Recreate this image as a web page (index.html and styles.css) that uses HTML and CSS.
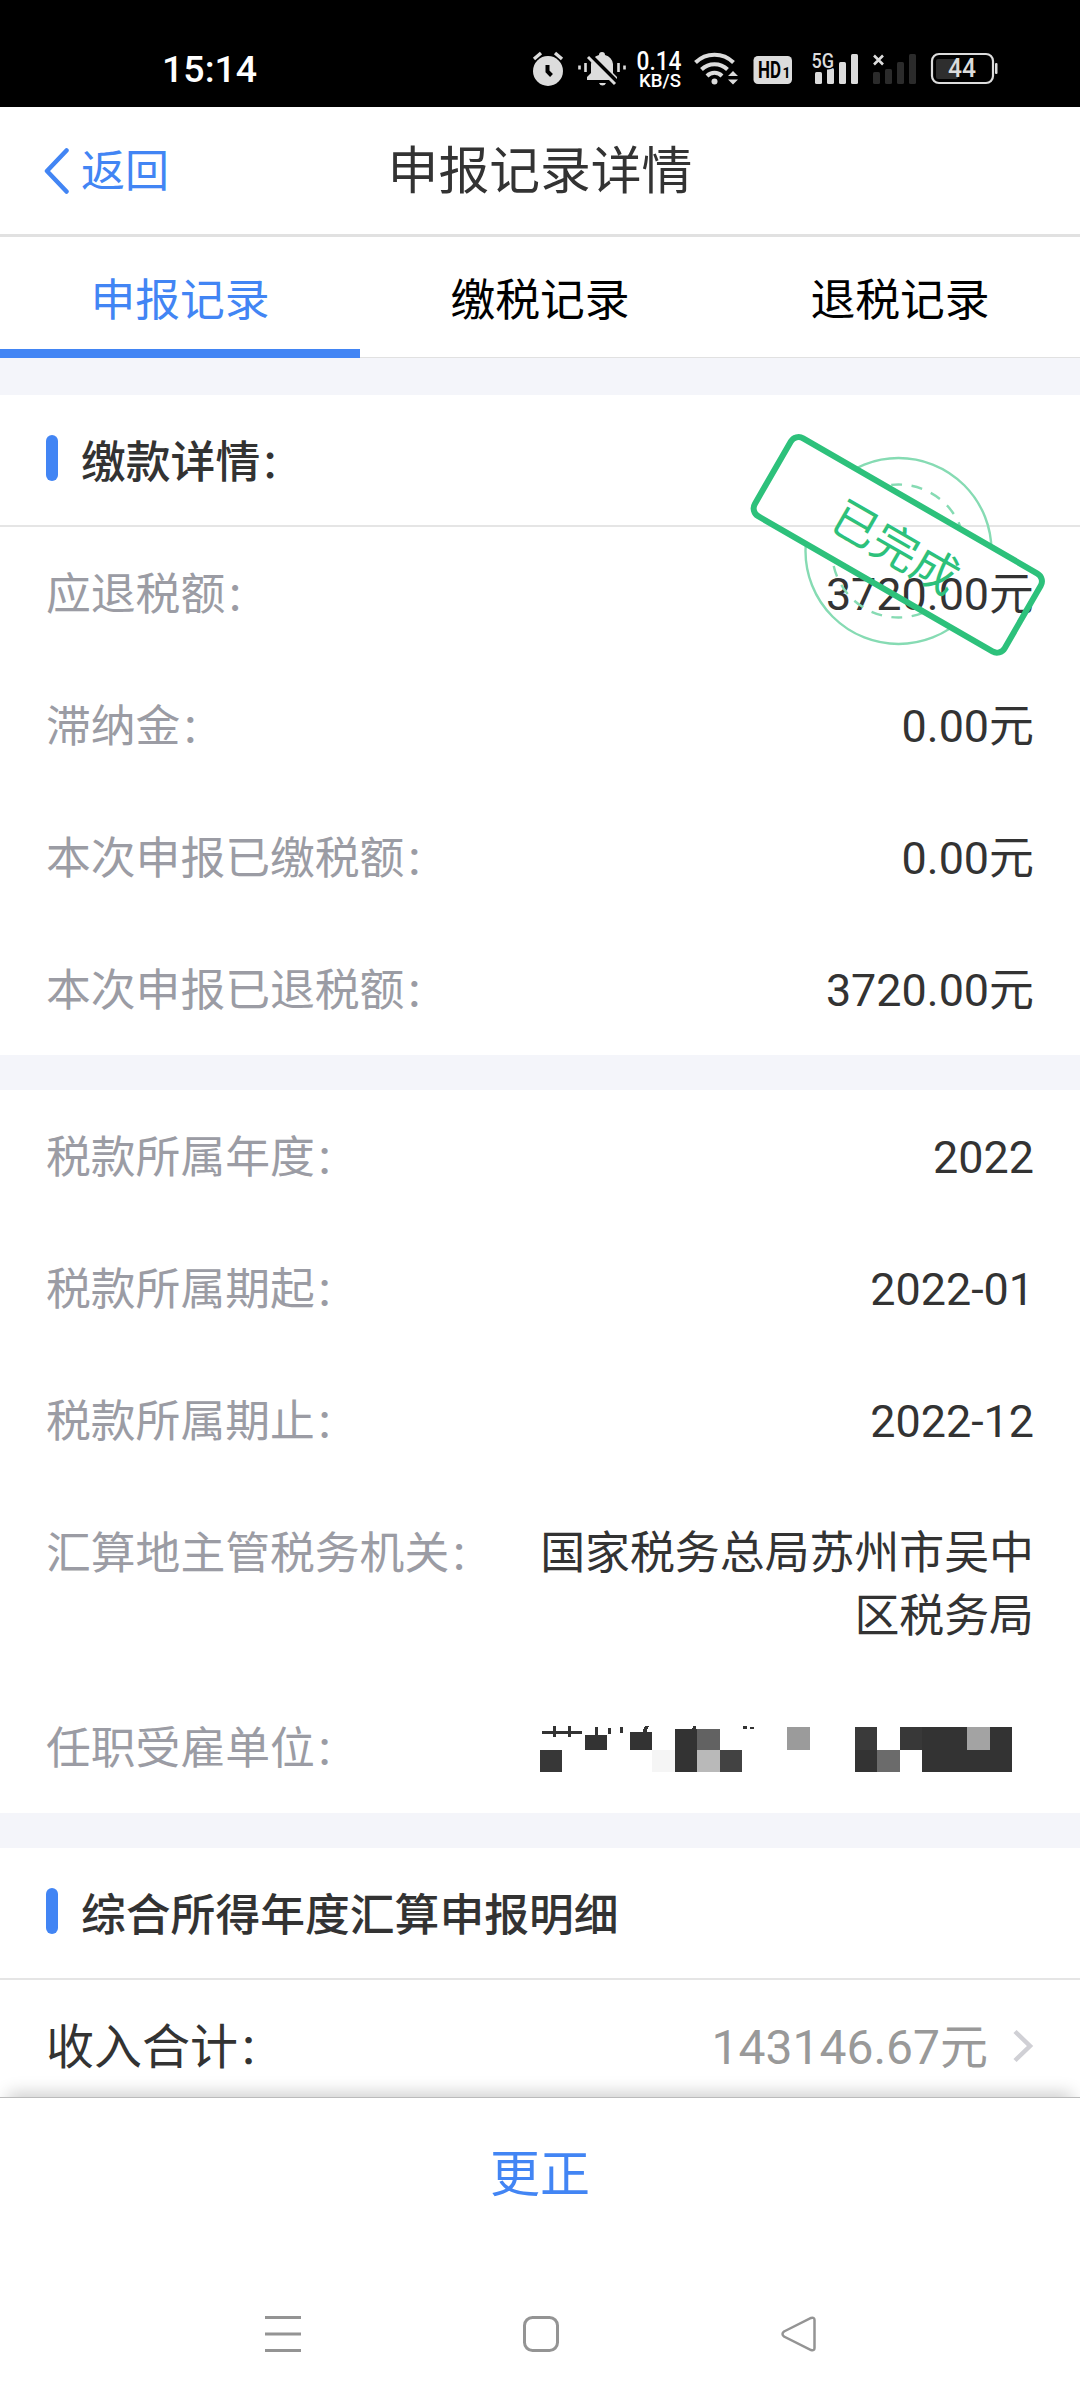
FILE: index.html
```html
<!DOCTYPE html>
<html lang="zh-CN">
<head>
  <meta charset="UTF-8">
  <meta name="viewport" content="width=device-width, initial-scale=1">
  <title>申报记录详情</title>
  <link rel="stylesheet" href="styles.css">
</head>
<body>

  <div class="status-bar">
    <span class="time">15:14</span>
    <svg class="status-icons" width="520" height="80" viewBox="0 0 520 80" fill="#dcdcdc">
      <!-- alarm -->
      <circle cx="48" cy="41" r="15"/>
      <path d="M34 29l7-6M62 29l-7-6" stroke="#dcdcdc" stroke-width="3.4"/>
      <path d="M47.5 35v6.500l4 4" stroke="#000" stroke-width="4" fill="none"/>
      <!-- muted bell -->
      <path d="M87 50v-3l4-4V34a11 11 0 0 1 8-9q0-3 3-3t3 3a11 11 0 0 1 8 9v9l4 4v3z"/>
      <path d="M99 53h7q-1 2.500-3.500 2.500T99 53z"/>
      <path d="M90 25l27 27" stroke="#000" stroke-width="4"/>
      <path d="M88 27l27 27" stroke="#dcdcdc" stroke-width="3"/>
      <path d="M79.500 35.500v4M85.500 33v9M118.500 33v9M124.500 35.500v4" stroke="#dcdcdc" stroke-width="2.600"/>
      <!-- network speed -->
      <text class="speed" x="136.500" y="39.500" textLength="45" lengthAdjust="spacingAndGlyphs">0.14</text>
      <text class="unit" x="139" y="56.500" textLength="42" lengthAdjust="spacingAndGlyphs">KB/S</text>
      <!-- wifi -->
      <g fill="none" stroke="#dcdcdc" stroke-width="4">
        <path d="M195.500 32.500a27 27 0 0 1 38 0"/>
        <path d="M201.500 39.500a18.500 18.500 0 0 1 26 0"/>
        <path d="M207 46a10.500 10.500 0 0 1 15 0"/>
      </g>
      <circle cx="214.500" cy="51.500" r="3"/>
      <path d="M228 46l5-5 5 5zM228 49.500l5 5 5-5z"/>
      <!-- HD -->
      <rect x="253.500" y="26" width="38.500" height="28" rx="4.500"/>
      <text class="hd" x="258" y="47.500" textLength="23" lengthAdjust="spacingAndGlyphs">HD</text>
      <text class="hd-num" x="282.500" y="47.500">1</text>
      <!-- signal, sim 1 -->
      <rect x="315" y="42" width="7" height="12" rx="1.500"/>
      <rect x="327" y="38" width="7" height="16" rx="1.500"/>
      <rect x="339" y="32" width="7" height="22" rx="1.500"/>
      <rect x="351" y="24" width="7" height="30" rx="1.500"/>
      <text class="net" x="311.500" y="37.500" textLength="22.500" lengthAdjust="spacingAndGlyphs">5G</text>
      <!-- signal, sim 2 -->
      <g fill="#2b2b2b">
        <rect x="373" y="42" width="7" height="12" rx="1.500"/>
        <rect x="385" y="39" width="7" height="15" rx="1.500"/>
        <rect x="397" y="32" width="7" height="22" rx="1.500"/>
        <rect x="409" y="24" width="7" height="30" rx="1.500"/>
      </g>
      <path d="M374 25.500l9 9M383 25.500l-9 9" stroke="#dcdcdc" stroke-width="2.600"/>
      <!-- battery -->
      <rect x="436" y="29" width="22" height="20" rx="2" fill="#2e2e2e"/>
      <rect x="432" y="24" width="61" height="29" rx="7" fill="none" stroke="#dcdcdc" stroke-width="2.200"/>
      <rect x="495" y="33" width="2.500" height="11" rx="1"/>
      <text class="battery" x="448" y="47" textLength="28" lengthAdjust="spacingAndGlyphs">44</text>
    </svg>
  </div>

  <header>
    <a class="back" href="#">
      <svg width="26" height="48" viewBox="0 0 26 48"><path d="M22.500 3.500L3 24l19.500 20.500" fill="none" stroke="#4285f4" stroke-width="4.500" stroke-linecap="round" stroke-linejoin="round"/></svg>
      <span>返回</span>
    </a>
    <h1>申报记录详情</h1>
  </header>

  <nav class="tabs">
    <a class="tab active" href="#">申报记录</a>
    <a class="tab" href="#">缴税记录</a>
    <a class="tab" href="#">退税记录</a>
  </nav>

  <main>
    <section class="card">
      <h2>缴款详情<i>：</i></h2>
      <div class="row"><span class="label">应退税额<i>：</i></span><span class="value">3720.00元</span></div>
      <div class="row"><span class="label">滞纳金<i>：</i></span><span class="value">0.00元</span></div>
      <div class="row"><span class="label">本次申报已缴税额<i>：</i></span><span class="value">0.00元</span></div>
      <div class="row"><span class="label">本次申报已退税额<i>：</i></span><span class="value">3720.00元</span></div>

      <!-- stamp -->
      <svg class="stamp" width="310" height="240" viewBox="-155 -120 310 240">
        <defs>
          <mask id="outside">
            <rect x="-155" y="-120" width="310" height="240" fill="#fff"/>
            <rect x="-144" y="-45" width="288" height="90" rx="10" transform="rotate(30)" fill="#000"/>
          </mask>
        </defs>
        <g mask="url(#outside)" fill="none" stroke="#86dbb3" stroke-width="2.400">
          <circle cx="0.500" cy="6" r="93"/>
          <circle cx="0.500" cy="6" r="66.500" stroke-dasharray="11 9.500" stroke-dashoffset="2"/>
        </g>
        <g transform="rotate(30)">
          <rect x="-144.500" y="-45" width="288.500" height="90" rx="9" fill="none" stroke="#2dc17b" stroke-width="6"/>
          <text x="-1" y="20" text-anchor="middle">已完成</text>
        </g>
      </svg>
    </section>

    <section class="card">
      <div class="row"><span class="label">税款所属年度<i>：</i></span><span class="value">2022</span></div>
      <div class="row"><span class="label">税款所属期起<i>：</i></span><span class="value">2022-01</span></div>
      <div class="row"><span class="label">税款所属期止<i>：</i></span><span class="value">2022-12</span></div>
      <div class="row"><span class="label">汇算地主管税务机关<i>：</i></span><span class="value">国家税务总局苏州市吴中区税务局</span></div>
      <div class="row">
        <span class="label">任职受雇单位<i>：</i></span>
        <!-- company name, masked -->
        <svg class="masked" width="494" height="63" viewBox="0 0 494 63" fill="#333" shape-rendering="crispEdges">
          <path d="M2 15h40v3H2zM13 10h3v11h-3zM28 10h3v11h-3zM55 11h3v9h-3zM68 12h3v6h-3zM80 11h3v6h-3zM203 10h4v3h-4zM210 11h4v2h-4z"/>
          <path d="M105 10h4l-3 7h-4zM153 10h3v4h-4z"/>
          <rect x="0" y="34" width="22" height="22" fill="#373737"/>
          <rect x="45" y="19" width="22" height="15"/>
          <rect x="90" y="16" width="22" height="18"/>
          <rect x="112" y="34" width="23" height="22" fill="#f5f5f5"/>
          <rect x="135" y="13" width="22" height="43"/>
          <rect x="157" y="13" width="23" height="21" fill="#626262"/>
          <rect x="157" y="34" width="23" height="22" fill="#b9b9b9"/>
          <rect x="180" y="34" width="22" height="22" fill="#424242"/>
          <rect x="247" y="11" width="23" height="23" fill="#9b9b9b"/>
          <rect x="315" y="11" width="22" height="23" fill="#3a3a3a"/>
          <rect x="315" y="34" width="22" height="22"/>
          <rect x="337" y="34" width="23" height="22" fill="#6b6b6b"/>
          <rect x="360" y="11" width="22" height="23" fill="#383838"/>
          <rect x="382" y="11" width="90" height="45"/>
          <rect x="427" y="11" width="23" height="23" fill="#a3a3a3"/>
        </svg>
      </div>
    </section>

    <section class="card">
      <h2>综合所得年度汇算申报明细</h2>
      <div class="row total">
        <span class="label">收入合计<i>：</i></span>
        <span class="value">143146.67元</span>
        <svg class="arrow" width="22" height="34" viewBox="0 0 22 34"><path d="M3 2.500L18 17 3 31.500" fill="none" stroke="#d0d0d5" stroke-width="4.500"/></svg>
      </div>
    </section>
  </main>

  <footer>
    <a class="fix" href="#">更正</a>
    <svg class="nav-keys" width="560" height="40" viewBox="0 0 560 40" fill="none" stroke="#949494" stroke-width="3">
      <path d="M5 3.500h36M5 20h36M5 36.500h36"/>
      <rect x="264.500" y="3.500" width="33" height="33" rx="8"/>
      <path d="M524 17.500L551 4q3.500-1 3.500 2v28q0 3-3.500 2L524 22.500q-3-2.500 0-5z" stroke-width="2.500"/>
    </svg>
  </footer>

</body>
</html>
```
FILE: styles.css
```css
* {
  box-sizing: border-box;
}
body {
  margin: 0;
  height: 2400px;
  overflow: hidden;
  display: flex;
  flex-direction: column;
  font-family: Roboto, "Noto Sans CJK SC", sans-serif;
  font-size: 44.8px;
  line-height: 63px;
  color: #333;
  background-color: #f4f5fa;
}
a {
  color: #4285f4;
  text-decoration: none;
}
h1, h2 {
  margin: 0;
}
i {
  font-style: normal;
  font-size: 0.88em;
  line-height: 1;
}

/* STATUS BAR */
.status-bar {
  height: 107px;
  flex-shrink: 0;
  background-color: #000;
  display: flex;
  justify-content: space-between;
  align-items: flex-start;
  padding: 30px 60px 0 162px;
}
.time {
  color: #fff;
  font-size: 37.5px;
  font-weight: 500;
  line-height: 78px;
}
.status-icons text {
  font-family: Roboto, sans-serif;
  font-weight: 500;
}
.status-icons .speed {
  font-size: 25px;
  fill: #fff;
}
.status-icons .unit {
  font-size: 18px;
  fill: #fff;
}
.status-icons .hd {
  font-size: 23px;
  font-weight: 700;
  fill: #000;
}
.status-icons .hd-num {
  font-size: 14px;
  font-weight: 700;
  fill: #000;
}
.status-icons .net {
  font-size: 21px;
  stroke: #000;
  stroke-width: 3px;
  paint-order: stroke;
}
.status-icons .battery {
  font-size: 25px;
}

/* HEADER */
header {
  position: relative;
  height: 130px;
  flex-shrink: 0;
  background-color: #fff;
  border-bottom: 3px solid #e1e1e1;
  display: flex;
  align-items: center;
  justify-content: center;
}
header h1 {
  padding-top: 1px;
  font-size: 50.8px;
  font-weight: 400;
}
.back {
  position: absolute;
  left: 44px;
  display: flex;
  align-items: center;
  gap: 11px;
}
.back span {
  padding-top: 3px;
  font-size: 44px;
}
.tabs {
  display: flex;
  height: 121px;
  flex-shrink: 0;
  background-color: #fff;
  border-bottom: 1px solid #e1e1e1;
}
.tab {
  flex: 1;
  height: 121px;
  padding-top: 32px;
  text-align: center;
  color: #000;
}
.tab.active {
  color: #4285f4;
  border-bottom: 9px solid #4285f4;
}

/* CONTENT */
main {
  flex: 1;
  min-height: 0;
  overflow: hidden;
  padding-top: 37px;
}
.card {
  position: relative;
  background-color: #fff;
  margin-bottom: 35px;
}
.card h2 {
  display: flex;
  align-items: center;
  height: 132px;
  padding: 4px 0 0 46px;
  font-size: 44.8px;
  font-weight: 500;
  border-bottom: 2px solid #e5e5e5;
}
.card h2::before {
  content: "";
  width: 12px;
  height: 46px;
  margin: 0 23px 8px 0;
  border-radius: 6px;
  background-color: #4285f4;
}
.card h2 i {
  padding-top: 6px;
}
.row {
  display: flex;
  justify-content: space-between;
  padding: 36px 46px 33px;
}
.label {
  color: #9b9ca4;
}
.value {
  max-width: 496px;
  font-size: 44.9px;
  text-align: right;
}
.masked {
  display: block;
  margin: -1px 0 1px;
}
.total {
  align-items: center;
}
.total .label {
  color: #333;
  font-size: 48px;
}
.total .value {
  color: #999;
  font-size: 48px;
  margin-left: auto;
}
.arrow {
  margin: 0 0 3px 24px;
}
.stamp {
  position: absolute;
  left: 743px;
  top: 30px;
}
.stamp text {
  font-family: "Noto Sans CJK SC", sans-serif;
  font-size: 46px;
  fill: #2dc17b;
}

/* FOOTER */
footer {
  position: relative;
  height: 303px;
  flex-shrink: 0;
  background-color: #fff;
  border-top: 1px solid #bbb;
  box-shadow: 0 -12px 16px -8px rgba(0,0,0,0.2);
  display: flex;
  flex-direction: column;
  align-items: center;
}
.fix {
  font-size: 50px;
  height: 150px;
  line-height: 154px;
}
.nav-keys {
  margin-top: 66px;
}
```
